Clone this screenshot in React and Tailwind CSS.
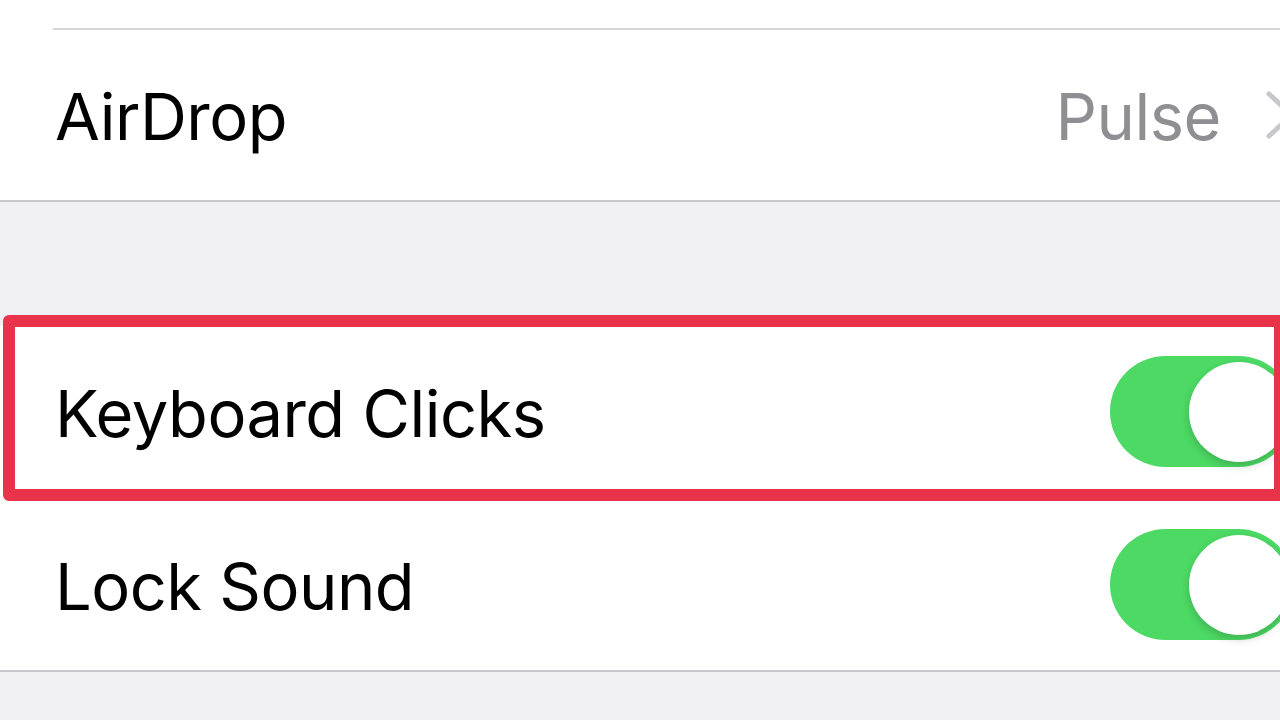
export default function App() {
  return (
    <div
      className="relative w-[1280px] h-[720px] overflow-hidden bg-[#efeff4]"
      style={{ fontFamily: "Inter, 'Noto Sans', sans-serif" }}
    >
      {/* AirDrop group */}
      <div className="bg-white border-b-2 border-[#c8c7cc]">
        <div className="h-[28px]" />
        <div className="ml-[53px] border-t-2 border-[#d6d6da]" />
        <div className="h-[170px] flex items-center justify-between pl-[55px]">
          <span className="text-[65px] text-black tracking-[-0.5px] mt-[4px]">AirDrop</span>
          <div className="flex items-center">
            <span className="text-[65px] text-[#8e8e93] tracking-[-0.5px] mt-[4px]">Pulse</span>
            <svg width="34" height="50" viewBox="0 0 34 50" className="ml-[44px] mr-[-19px]">
              <path d="M4 4 L27 25 L4 46" fill="none" stroke="#c7c7cc" strokeWidth="5" strokeLinecap="round" strokeLinejoin="round" />
            </svg>
          </div>
        </div>
      </div>

      <div className="h-[124px]" />

      {/* Sounds group */}
      <div className="bg-white border-b-2 border-[#c8c7cc]">
        <Row label="Keyboard Clicks" />
        <div className="ml-[53px] border-t-2 border-[#d6d6da]" />
        <Row label="Lock Sound" />
      </div>

      {/* highlight annotation */}
      <div className="absolute left-[3px] top-[315px] w-[1283px] h-[186px] border-[12px] border-[#e8334a] rounded-[6px]" />
    </div>
  );
}

function Row({ label }) {
  return (
    <div className="h-[171px] flex items-center justify-between pl-[55px]">
      <span className="text-[65px] text-black tracking-[-0.5px] mt-[4px]">{label}</span>
      <div className="relative w-[184px] h-[111px] rounded-full bg-[#4cd964] mr-[-14px]">
        <div className="absolute right-[5px] top-[6px] w-[100px] h-[100px] rounded-full bg-white shadow-[0_4px_8px_rgba(0,0,0,0.18)]" />
      </div>
    </div>
  );
}
